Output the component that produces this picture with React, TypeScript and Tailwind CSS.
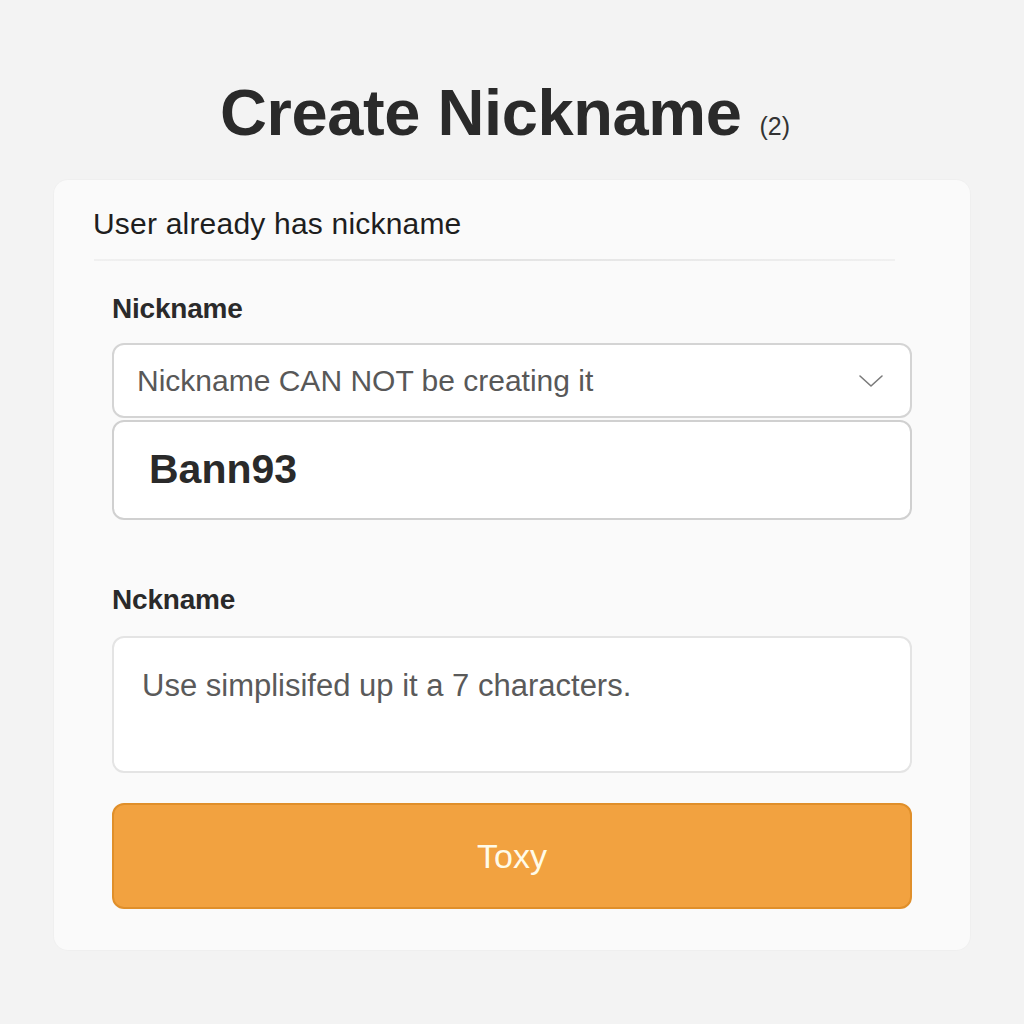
export default function App() {
  return (
    <div
      className="min-h-screen w-full bg-[#f3f3f3] flex flex-col items-center"
      style={{ fontFamily: '"Liberation Sans", Arial, sans-serif' }}
    >
      {/* Title */}
      <div className="mt-[74px] mr-[14px] flex items-baseline justify-center h-[78px]">
        <h1 className="text-[65px] leading-[78px] font-bold text-[#2a2a2a] tracking-[-0.4px]">
          Create Nickname
        </h1>
        <span className="ml-[18px] text-[25px] text-[#333]">(2)</span>
      </div>

      {/* Card */}
      <div className="mt-[28px] w-[916px] rounded-[14px] bg-[#fafafa] shadow-[0_0_0_1px_rgba(0,0,0,0.015)] pb-[41px]">
        <div className="pl-[39px] pt-[24px] h-[79px] text-[30px] leading-[40px] text-[#1e1e1e] tracking-[0.2px]">
          User already has nickname
        </div>
        <div className="ml-[40px] mr-[75px] h-[2px] bg-gradient-to-r from-[#f0f0f0] via-[#e3e3e3] to-[#f0f0f0]" />

        <div className="px-[58px]">
          <label className="block mt-[30px] text-[28px] leading-[36px] font-semibold text-[#2a2a2a] tracking-[-0.2px]">
            Nickname
          </label>

          <div className="mt-[16px] h-[75px] rounded-[12px] border-2 border-[#d4d4d4] bg-white flex items-center justify-between pl-[23px] pr-[26px]">
            <span className="text-[30px] text-[#585858]">Nickname CAN NOT be creating it</span>
            <svg width="26" height="16" viewBox="0 0 26 16" fill="none" stroke="#7a7a7a" strokeWidth="1.6" strokeLinecap="round" strokeLinejoin="round">
              <path d="M2 3 L13 13 L24 3" />
            </svg>
          </div>

          <div className="mt-[2px] h-[100px] rounded-[12px] border-2 border-[#d0d0d0] bg-white flex items-center pl-[35px]">
            <span className="text-[41px] font-bold text-[#2a2a2a]">Bann93</span>
          </div>

          <label className="block mt-[62px] text-[28px] leading-[36px] font-semibold text-[#2a2a2a] tracking-[-0.2px]">
            Nckname
          </label>

          <div className="mt-[18px] h-[137px] rounded-[12px] border-2 border-[#e4e4e4] bg-white pl-[28px] pt-[28px]">
            <span className="text-[31px] leading-[40px] text-[#5a5a5a]">
              Use simplisifed up it a 7 characters.
            </span>
          </div>

          <button className="mt-[30px] w-full h-[106px] rounded-[12px] bg-[#f2a240] border-2 border-[#e08f2a] flex items-center justify-center">
            <span className="text-[34px] text-[#fffbe8] font-medium">Toxy</span>
          </button>
        </div>
      </div>
    </div>
  )
}
